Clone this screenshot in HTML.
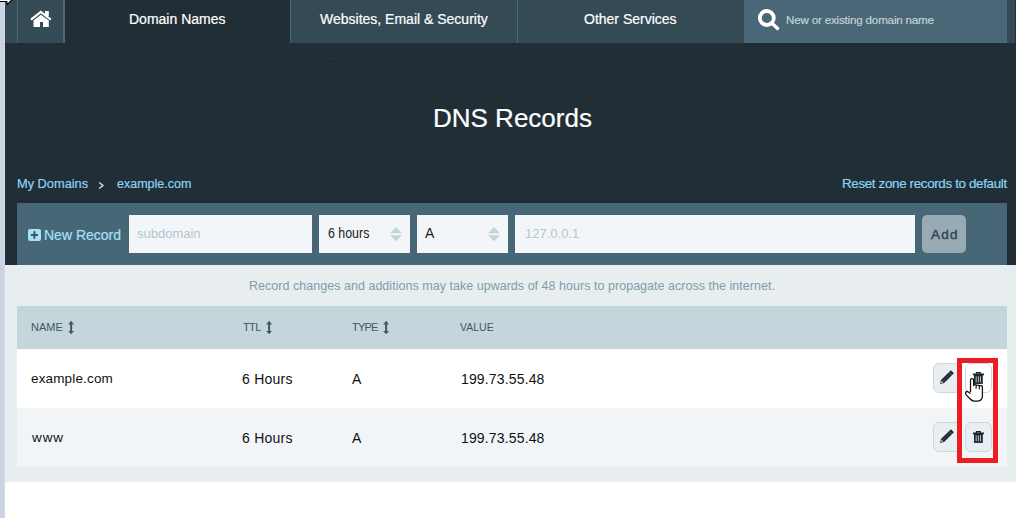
<!DOCTYPE html>
<html><head><meta charset="utf-8">
<style>
*{margin:0;padding:0;box-sizing:border-box}
html,body{width:1019px;height:518px;overflow:hidden;background:#fff;font-family:"Liberation Sans",sans-serif}
.a{position:absolute}
.t{position:absolute;white-space:pre;line-height:1}
.b{-webkit-text-stroke:0.2px currentColor}
#strip{left:0;top:0;width:5px;height:518px;background:#c9d3e2;border-right:1px solid #d2dae7}
#page{left:5px;top:0;width:1011px;height:265px;background:#212e36}
#nav{left:5px;top:0;width:1010px;height:43px;background:#344b56}
.tab{position:absolute;top:0;height:43px;background:#344b56;border-left:1px solid #4b6a78}
#light{left:5px;top:265px;width:1011px;height:217px;background:#e8edf0}
</style></head><body>
<div id="strip" class="a"></div>
<div id="page" class="a"></div>
<div id="nav" class="a"></div>
<!-- tabs -->
<div class="tab" style="left:17px;width:48px;border-right:2px solid #4b6a78"></div>
<div class="a" style="left:65px;top:0;width:225px;height:43px;background:#212e36"></div>
<div class="tab" style="left:290px;width:227px"></div>
<div class="tab" style="left:517px;width:227px"></div>
<div class="a" style="left:744px;top:0;width:263px;height:43px;background:#496777"></div>

<div class="t b" style="left:129px;top:12px;font-size:14px;color:#fff">Domain Names</div>
<div class="t b" style="left:320px;top:12px;font-size:14px;color:#fff">Websites, Email &amp; Security</div>
<div class="t b" style="left:584px;top:12px;font-size:14px;color:#fff">Other Services</div>
<div class="t b" style="left:786px;top:14px;font-size:11.6px;color:#c3d1d8;letter-spacing:-0.18px">New or existing domain name</div>

<!-- title -->
<div class="t b" style="left:433px;top:105px;font-size:26px;color:#fff">DNS Records</div>

<!-- breadcrumb -->
<div class="t b" style="left:17px;top:178px;font-size:12.8px;color:#8bd3f4">My Domains</div>
<svg class="a" style="left:0;top:0" width="120" height="200"><polyline points="99.2,182.4 103,185.4 99.2,188.4" fill="none" stroke="#d2eaf6" stroke-width="1.3"/></svg>
<div class="t b" style="left:117px;top:178px;font-size:12.5px;color:#8bd3f4">example.com</div>
<div class="t b" style="left:842px;top:177px;font-size:13.4px;color:#8bd3f4;letter-spacing:-0.35px">Reset zone records to default</div>

<!-- new record bar -->
<div class="a" style="left:17px;top:203px;width:990px;height:62px;background:#486776"></div>
<div class="a" style="left:28px;top:229px;width:13px;height:12px;background:#a6e0f9;border-radius:2px"></div>
<div class="t b" style="left:44px;top:228px;font-size:14px;color:#a6e0f9">New Record</div>
<div class="a" style="left:129px;top:215px;width:183px;height:38px;background:#f2f6f9"></div>
<div class="t" style="left:137px;top:227px;font-size:13px;color:#b2c6d0">subdomain</div>
<div class="a" style="left:319px;top:215px;width:91px;height:38px;background:#f2f6f9"></div>
<div class="t" style="left:328px;top:226px;font-size:14px;color:#1b1b1b;transform:scaleX(0.885);transform-origin:0 0">6 hours</div>
<div class="a" style="left:417px;top:215px;width:91px;height:38px;background:#f2f6f9"></div>
<div class="t" style="left:425px;top:226px;font-size:14px;color:#1b1b1b">A</div>
<div class="a" style="left:515px;top:215px;width:400px;height:38px;background:#f2f6f9"></div>
<div class="t" style="left:525px;top:227px;font-size:13px;color:#b3c6cf">127.0.0.1</div>
<div class="a" style="left:922px;top:215px;width:44px;height:38px;background:#98aab3;border-radius:5px"></div>
<div class="t" style="left:931px;top:228px;font-size:13.5px;color:#2f4550;letter-spacing:1.2px;-webkit-text-stroke:0.4px currentColor">Add</div>

<!-- light area -->
<div id="light" class="a"></div>
<div class="t" style="left:249px;top:280px;font-size:12.5px;color:#7f9dab;letter-spacing:0.03px">Record changes and additions may take upwards of 48 hours to propagate across the internet.</div>
<div class="a" style="left:17px;top:306px;width:990px;height:43px;background:#c5d5dc"></div>
<div class="t" style="left:31px;top:322px;font-size:11px;color:#3e5866">NAME</div>
<div class="t" style="left:243px;top:322px;font-size:11px;color:#3e5866;letter-spacing:-0.6px">TTL</div>
<div class="t" style="left:352px;top:322px;font-size:11px;color:#3e5866;letter-spacing:-0.8px">TYPE</div>
<div class="t" style="left:460px;top:322px;font-size:10.5px;color:#3e5866">VALUE</div>

<div class="a" style="left:17px;top:349px;width:990px;height:59px;background:#fff"></div>
<div class="a" style="left:17px;top:408px;width:990px;height:58px;background:#f1f5f8"></div>
<div class="t" style="left:31px;top:372px;font-size:13.5px;color:#111;letter-spacing:0.15px">example.com</div>
<div class="t" style="left:242px;top:372px;font-size:14px;color:#111;letter-spacing:0.25px">6 Hours</div>
<div class="t" style="left:352px;top:372px;font-size:14px;color:#111">A</div>
<div class="t" style="left:461px;top:372px;font-size:14px;color:#111;letter-spacing:0.15px">199.73.55.48</div>
<div class="t" style="left:32px;top:431px;font-size:13.5px;color:#111;letter-spacing:0.9px">www</div>
<div class="t" style="left:242px;top:431px;font-size:14px;color:#111;letter-spacing:0.25px">6 Hours</div>
<div class="t" style="left:352px;top:431px;font-size:14px;color:#111">A</div>
<div class="t" style="left:461px;top:431px;font-size:14px;color:#111;letter-spacing:0.15px">199.73.55.48</div>

<!-- buttons -->
<div class="a" style="left:933px;top:363px;width:28px;height:30px;background:#e9eef2;border:1px solid #c6d8e0;border-radius:6px"></div>
<div class="a" style="left:965px;top:363px;width:27px;height:30px;background:#fff;border:1px solid #c6d8e0;border-radius:6px"></div>
<div class="a" style="left:933px;top:422px;width:28px;height:30px;background:#e9eef2;border:1px solid #c6d8e0;border-radius:6px"></div>
<div class="a" style="left:965px;top:422px;width:27px;height:30px;background:#e9eef2;border:1px solid #c6d8e0;border-radius:6px"></div>


<!-- icons overlay -->
<svg class="a" style="left:0;top:0" width="1019" height="518" viewBox="0 0 1019 518">
  <!-- cursor tail top-left -->
  <path d="M-1,-1 L-1,1.5 L6.8,1.5 L7.3,4.3 L12.3,-0.6 L12.3,-1 Z" fill="#fff"/>
  <path d="M-1,1.5 L6.8,1.5 L7.3,4.3 L12.3,-0.6" fill="none" stroke="#000" stroke-width="1.1"/>
  <!-- home -->
  <polyline points="31,19.6 40.8,11.8 50.8,19.6" fill="none" stroke="#fff" stroke-width="2.2" stroke-linejoin="miter"/>
  <rect x="45" y="11" width="3.8" height="5" fill="#fff"/>
  <polygon points="33.5,20.5 40.8,14.8 48.8,20.5 48.8,27 43,27 43,22 40,22 40,27 33.5,27" fill="#fff"/>
  <!-- search -->
  <circle cx="766.8" cy="18" r="7" fill="none" stroke="#fff" stroke-width="3.8"/>
  <line x1="772" y1="23.2" x2="777.6" y2="28.4" stroke="#fff" stroke-width="3.4" stroke-linecap="round"/>
  <!-- plus in new record -->
  <rect x="30.8" y="234" width="7.2" height="2" fill="#3b5563"/>
  <rect x="33.4" y="231.2" width="2" height="7.6" fill="#3b5563"/>
  <!-- select arrows -->
  <polygon points="390,233.2 396,227 402,233.2" fill="#c5d4db"/>
  <polygon points="390,235.2 396,241.2 402,235.2" fill="#c5d4db"/>
  <polygon points="488,233.2 494,227 500,233.2" fill="#c5d4db"/>
  <polygon points="488,235.2 494,241.2 500,235.2" fill="#c5d4db"/>
  <!-- sort arrows -->
  <g fill="#3d5866">
    <polygon points="68.2,324.6 71.1,320.8 74,324.6"/><rect x="70.1" y="324" width="2" height="7.6"/><polygon points="68.2,331 71.1,334.2 74,331"/>
    <polygon points="266.2,324.6 269.1,320.8 272,324.6"/><rect x="268.1" y="324" width="2" height="7.6"/><polygon points="266.2,331 269.1,334.2 272,331"/>
    <polygon points="383.2,324.6 386.1,320.8 389,324.6"/><rect x="385.1" y="324" width="2" height="7.6"/><polygon points="383.2,331 386.1,334.2 389,331"/>
  </g>
</svg>


<svg class="a" style="left:0;top:0" width="1019" height="518" viewBox="0 0 1019 518">
  <rect x="330" y="61" width="1" height="1" fill="#000"/>
  <!-- pencils -->
  <g id="pen">
    <polygon points="940.1,442.9 941.0,438.95 950.9,429.3 953.9,432.3 944.1,442.05" fill="#1f2a31"/>
    <polygon points="941.1,441.9 941.7,439.7 943.4,441.4" fill="#dfe6ea"/>
    <line x1="943.3" y1="439.7" x2="949.4" y2="433.7" stroke="#7d8c94" stroke-width="0.6" stroke-dasharray="1,0.8"/>
    <line x1="949.07" y1="431.45" x2="951.73" y2="434.15" stroke="#8595a0" stroke-width="0.7"/>
  </g>
  <g transform="translate(0,-59)"><g>
    <polygon points="940.1,442.9 941.0,438.95 950.9,429.3 953.9,432.3 944.1,442.05" fill="#1f2a31"/>
    <polygon points="941.1,441.9 941.7,439.7 943.4,441.4" fill="#dfe6ea"/>
    <line x1="943.3" y1="439.7" x2="949.4" y2="433.7" stroke="#7d8c94" stroke-width="0.6" stroke-dasharray="1,0.8"/>
    <line x1="949.07" y1="431.45" x2="951.73" y2="434.15" stroke="#8595a0" stroke-width="0.7"/>
  </g></g>
  <!-- trash -->
  <g id="trash" fill="#1c262c">
    <path d="M976.5,433 v-1.4 h3.8 v1.4" fill="none" stroke="#1c262c" stroke-width="1.3"/>
    <rect x="972.9" y="432.5" width="11.1" height="1.8"/>
    <rect x="974" y="434" width="8.8" height="8.9"/>
    <rect x="975.7" y="435.3" width="0.9" height="6" fill="#c9d2d8"/>
    <rect x="977.9" y="435.3" width="0.9" height="6" fill="#c9d2d8"/>
    <rect x="980.1" y="435.3" width="0.9" height="6" fill="#c9d2d8"/>
  </g>
  <g transform="translate(0,-59)"><g fill="#1c262c">
    <path d="M976.5,433 v-1.4 h3.8 v1.4" fill="none" stroke="#1c262c" stroke-width="1.3"/>
    <rect x="972.9" y="432.5" width="11.1" height="1.8"/>
    <rect x="974" y="434" width="8.8" height="8.9"/>
    <rect x="975.7" y="435.3" width="0.9" height="6" fill="#c9d2d8"/>
    <rect x="977.9" y="435.3" width="0.9" height="6" fill="#c9d2d8"/>
    <rect x="980.1" y="435.3" width="0.9" height="6" fill="#c9d2d8"/>
  </g></g>
</svg>

<!-- red box -->
<div class="a" style="left:957px;top:358px;width:41px;height:105px;border:5px solid #ec1c24"></div>

<svg class="a" style="left:0;top:0" width="1019" height="518" viewBox="0 0 1019 518">
  <path d="M970.5,392 L970.5,380 C970.5,378 973.6,378 973.6,380 L973.6,385.6 C973.6,384.4 976.5,384.4 976.5,385.8 C976.5,384.8 979.5,384.8 979.5,386.2 C979.5,385.2 982.4,385.2 982.4,386.8 L982.4,396 C982.4,399 980.5,401 977.5,401 L974.2,401 C972.4,401 971.2,400.2 970.2,399 L966,394.6 C964.9,393.4 965.6,391 967.6,391.6 L970.5,393.6" fill="#fff" stroke="#111" stroke-width="1.25" stroke-linejoin="round"/>
  <path d="M976.1,385.6 L976.1,388.8 M979.3,386 L979.3,389.4" stroke="#111" stroke-width="1.1"/>
</svg>

</body></html>
